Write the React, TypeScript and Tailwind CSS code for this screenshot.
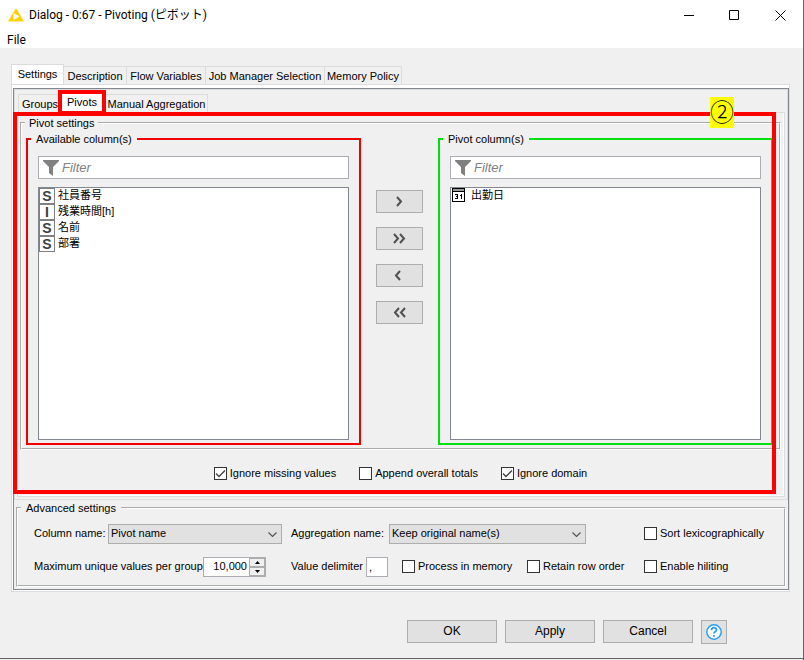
import { useState } from 'react';
import type { ReactNode } from 'react';
import clsx from 'clsx';

type ColumnType = 'S' | 'I' | 'date';

interface Column {
  name: string;
  type: ColumnType;
}

const availableColumns: Column[] = [
  { name: '社員番号', type: 'S' },
  { name: '残業時間[h]', type: 'I' },
  { name: '名前', type: 'S' },
  { name: '部署', type: 'S' },
];

const pivotColumns: Column[] = [{ name: '出勤日', type: 'date' }];

const settingsTabs = [
  { label: 'Description', width: 'w-[64px]' },
  { label: 'Flow Variables', width: 'w-[80px]' },
  { label: 'Job Manager Selection', width: 'w-[120px]' },
  { label: 'Memory Policy', width: 'w-[78px]' },
];

function TypeIcon({ type }: { type: ColumnType }) {
  if (type === 'date') {
    return (
      <svg className="w-[13px] h-[14px] ml-px mr-[3px] shrink-0" viewBox="0 0 13 14" shapeRendering="crispEdges" aria-hidden="true">
        <rect x="0.5" y="0.5" width="12" height="13" fill="#fff" stroke="#000" />
        <rect x="1" y="1" width="11" height="2" fill="#999" />
        <path d="M1 3.5h11M3 6.5h3M5.5 6v5M4 8.5h2M3 10.5h3M9.500 6v5M8 7.500h1" stroke="#000" fill="none" />
      </svg>
    );
  }
  return (
    <span className="size-4 shrink-0 border border-[#808080] bg-white text-[#404040] font-['Liberation_Sans'] font-bold text-sm leading-[14px] text-center">
      {type}
    </span>
  );
}

function FunnelIcon() {
  return (
    <svg className="w-4 h-4 col-start-1 row-start-1 ml-[5px] z-10" viewBox="0 0 16 16" aria-hidden="true">
      <path d="M0 0h16v1l-6 6v9l-4-3V7L0 1z" fill="#808080" />
    </svg>
  );
}

interface ColumnListProps {
  title: string;
  columns: Column[];
  className: string;
}

function ColumnList({ title, columns, className }: ColumnListProps) {
  const [filter, setFilter] = useState('');

  return (
    <fieldset className={clsx('flex-1 min-w-0 border-2 px-[10px] pt-[9px] pb-[3px]', className)}>
      <legend className="-ml-[7px] px-[5px] h-4 leading-4">{title}</legend>
      <div className="grid items-center">
        <FunnelIcon />
        <input
          value={filter}
          onChange={(e) => setFilter(e.target.value)}
          placeholder="Filter"
          aria-label={`Filter ${title}`}
          className="col-start-1 row-start-1 w-full h-[23px] pl-[23px] bg-white border border-[#abadb3] text-[13px] italic placeholder:text-[#808080] focus:outline-none"
        />
      </div>
      <ul className="mt-2 h-[253px] bg-white border border-[#828790] overflow-y-auto">
        {columns.map((column) => (
          <li key={column.name} className="flex items-start h-4 gap-[3px]">
            <TypeIcon type={column.type} />
            <span className="leading-[14px]">{column.name}</span>
          </li>
        ))}
      </ul>
    </fieldset>
  );
}

interface MoveButtonProps {
  label: string;
  path: string;
}

function MoveButton({ label, path }: MoveButtonProps) {
  return (
    <button aria-label={label} className="w-[47px] h-[23px] grid place-items-center bg-[#e1e1e1] border border-[#adadad]">
      <svg className="w-[13px] h-[11px]" viewBox="0 0 13 11" fill="none" stroke="#505050" strokeWidth="2" aria-hidden="true">
        <path d={path} />
      </svg>
    </button>
  );
}

interface CheckProps {
  label: string;
  defaultChecked?: boolean;
  className?: string;
}

function Check({ label, defaultChecked, className }: CheckProps) {
  return (
    <label className={clsx('flex items-center gap-[3px] whitespace-nowrap', className)}>
      <span className="grid">
        <input
          type="checkbox"
          defaultChecked={defaultChecked}
          className="peer col-start-1 row-start-1 appearance-none size-[13px] bg-white border border-[#333]"
        />
        <svg className="col-start-1 row-start-1 size-[13px] invisible peer-checked:visible pointer-events-none" viewBox="0 0 13 13" fill="none" stroke="#404040" aria-hidden="true">
          <path d="M2 6.500l3 3L11 3.500" strokeWidth="1.300" />
        </svg>
      </span>
      {label}
    </label>
  );
}

interface ComboProps {
  id: string;
  options: string[];
  className: string;
}

function Combo({ id, options, className }: ComboProps) {
  return (
    <span className={clsx('grid items-center', className)}>
      <select id={id} className="col-start-1 row-start-1 appearance-none w-full h-5 pl-[2px] bg-[#e1e1e1] border border-[#adadad]">
        {options.map((option) => (
          <option key={option}>{option}</option>
        ))}
      </select>
      <svg className="col-start-1 row-start-1 justify-self-end mr-[5px] mt-[3px] w-[9px] h-[6px] pointer-events-none" viewBox="0 0 9 6" fill="none" stroke="#555" aria-hidden="true">
        <path d="M0.500 0.500l4 4 4-4" strokeWidth="1.200" />
      </svg>
    </span>
  );
}

function DialogButton({ children }: { children: ReactNode }) {
  return <button className="w-[90px] h-[23px] bg-[#e1e1e1] border border-[#adadad] text-xs">{children}</button>;
}

function TitleBar() {
  return (
    <header className="bg-white text-xs font-[Roboto,'Noto_Sans_CJK_JP',sans-serif]">
      <div className="flex items-center h-[30px] pl-2">
        <svg className="w-4 h-[14px]" viewBox="0 0 16 14" aria-hidden="true">
          <path d="M8 0l8 13.500H0z" fill="#fdd100" />
          <path d="M5.500 5l6 3.500-6 3.500z" fill="#fff" />
        </svg>
        <h1 className="ml-[5px] flex-1">Dialog - 0:67 - Pivoting (ピボット)</h1>
        <button aria-label="Minimize" className="w-[45px] h-[30px] grid place-items-center">
          <svg className="size-[11px]" viewBox="0 0 11 11" stroke="#000" aria-hidden="true">
            <path d="M0 5.500h10" />
          </svg>
        </button>
        <button aria-label="Maximize" className="w-[45px] h-[30px] grid place-items-center">
          <svg className="size-[11px]" viewBox="0 0 11 11" fill="none" stroke="#000" aria-hidden="true">
            <path d="M0.500 0.500h9v9h-9z" />
          </svg>
        </button>
        <button aria-label="Close" className="w-[46px] h-[30px] grid place-items-center">
          <svg className="size-[11px]" viewBox="0 0 11 11" stroke="#000" aria-hidden="true">
            <path d="M0.500 0.500l10 10M10.500 0.500l-10 10" />
          </svg>
        </button>
      </div>
      <nav className="flex h-[18px] pl-[7px]">
        <button className="leading-5">File</button>
      </nav>
    </header>
  );
}

function PivotsPanel() {
  return (
    <div className="border border-[#dcdcdc] bg-[#f0f0f0] shadow-[inset_-1px_-1px_0_#fff] pl-[2px] pr-[3px] pb-[14px]">
      <fieldset className="border-2 [border-style:groove] border-white pl-1 pr-[6px] pb-[3px] mt-[2px]">
        <legend className="ml-[-1px] px-1 h-4 leading-4">Pivot settings</legend>
        <div className="flex">
          <ColumnList title="Available column(s)" columns={availableColumns} className="border-[#f00000]" />
          <div className="w-[77px] shrink-0 flex flex-col items-center gap-[14px] pt-[59px]">
            <MoveButton label="Add" path="M4 1l4 4.500-4 4.500" />
            <MoveButton label="Add all" path="M1 1l4 4.500-4 4.500M7 1l4 4.500-4 4.500" />
            <MoveButton label="Remove" path="M7 1L3 5.500l4 4.500" />
            <MoveButton label="Remove all" path="M6 1L2 5.500l4 4.500M12 1L8 5.500l4 4.500" />
          </div>
          <ColumnList title="Pivot column(s)" columns={pivotColumns} className="border-[#00e010]" />
        </div>
      </fieldset>
      <div className="flex justify-center gap-[23px] mt-[15px]">
        <Check label="Ignore missing values" defaultChecked />
        <Check label="Append overall totals" />
        <Check label="Ignore domain" defaultChecked />
      </div>
    </div>
  );
}

function AdvancedSettings() {
  return (
    <fieldset className="border-2 [border-style:groove] border-white mx-[2px] mb-[2px] pl-4 pr-[18px] pt-2 pb-[8px]">
      <legend className="-ml-[13px] px-[5px] h-4 leading-4">Advanced settings</legend>
      <div className="flex items-center h-5">
        <label htmlFor="column-name" className="w-[74px] whitespace-nowrap">Column name:</label>
        <Combo id="column-name" options={['Pivot name', 'Aggregation name']} className="w-[174px]" />
        <label htmlFor="aggregation-name" className="w-[98px] ml-[9px] whitespace-nowrap">Aggregation name:</label>
        <Combo id="aggregation-name" options={['Keep original name(s)', 'Aggregation method (column name)']} className="w-[197px]" />
        <Check label="Sort lexicographically" className="w-[122px] ml-auto" />
      </div>
      <div className="flex items-center h-5 mt-[13px]">
        <label htmlFor="max-values" className="w-[169px] whitespace-nowrap">Maximum unique values per group</label>
        <div className="flex w-[63px] h-5 bg-white border border-[#abadb3]">
          <input id="max-values" defaultValue="10,000" className="flex-1 min-w-0 text-right pr-[2px] focus:outline-none" />
          <div className="flex flex-col w-4">
            <button aria-label="Increase" className="flex-1 grid place-items-center bg-[#f0f0f0] border border-[#adadad]">
              <svg className="w-[5px] h-[3px]" viewBox="0 0 5 3" aria-hidden="true"><path d="M2.500 0L5 3H0z" /></svg>
            </button>
            <button aria-label="Decrease" className="flex-1 grid place-items-center bg-[#f0f0f0] border border-[#adadad]">
              <svg className="w-[5px] h-[3px]" viewBox="0 0 5 3" aria-hidden="true"><path d="M0 0h5L2.500 3z" /></svg>
            </button>
          </div>
        </div>
        <label htmlFor="delimiter" className="w-[75px] ml-[25px] whitespace-nowrap">Value delimiter</label>
        <input id="delimiter" defaultValue="," className="w-[22px] h-5 pl-[2px] bg-white border border-[#abadb3] focus:outline-none" />
        <Check label="Process in memory" className="w-[125px] ml-[14px]" />
        <Check label="Retain row order" />
        <Check label="Enable hiliting" className="w-[122px] ml-auto" />
      </div>
    </fieldset>
  );
}

const tabClass = 'h-[18px] border border-b-0 border-[#dcdcdc] whitespace-nowrap text-center leading-[18px]';

export default function App() {
  return (
    <div className="min-h-screen flex flex-col bg-[#f0f0f0] border-r border-[#646464] text-[11px] text-black font-['Liberation_Sans','Noto_Sans_CJK_JP',sans-serif]">
      <TitleBar />
      <main className="flex-1 pt-4 pl-[11px] pr-[13px] border-b border-[#646464] mb-px">
        <div role="tablist" className="flex items-end">
          <button role="tab" aria-selected="true" className="w-[53px] h-5 bg-white border border-b-0 border-[#dcdcdc]">
            Settings
          </button>
          {settingsTabs.map((tab) => (
            <button key={tab.label} role="tab" aria-selected="false" className={clsx(tabClass, '-ml-px', tab.width)}>
              {tab.label}
            </button>
          ))}
        </div>

        <div className="border border-[#dcdcdc] bg-white pt-[3px] pl-px pb-px">
          <div className="border border-[#828790] bg-[#f0f0f0]">
            <div className="relative border border-[#dcdcdc] pt-[2px] px-[2px] pb-[2px]">
              <div role="tablist" className="flex items-end h-5 pl-px">
                <button role="tab" aria-selected="false" className={clsx(tabClass, 'w-[41px] pl-[3px]')}>Groups</button>
                <button role="tab" aria-selected="true" className="relative z-10 w-[46px] h-5 bg-white">
                  Pivots
                  <span className="absolute -inset-x-px -top-[2px] -bottom-[3px] border-4 border-[#f00]" />
                </button>
                <button role="tab" aria-selected="false" className={clsx(tabClass, 'w-[103px]')}>Manual Aggregation</button>
              </div>
              <PivotsPanel />

              <div className="absolute -left-[2px] right-[11px] top-[22px] bottom-[5px] border-4 border-[#f00] pointer-events-none">
                <span className="absolute right-[38px] -top-[19px] w-6 h-[31px] bg-[#ff0] text-2xl leading-[28px] text-center font-['Noto_Sans_CJK_JP'] font-light">②</span>
              </div>
            </div>
            <AdvancedSettings />
          </div>
        </div>

        <div className="flex justify-end gap-2 mt-7 mb-[14px] pr-[63px]">
          <DialogButton>OK</DialogButton>
          <DialogButton>Apply</DialogButton>
          <DialogButton>Cancel</DialogButton>
          <button aria-label="Help" className="w-[26px] h-6 grid place-items-center bg-[#e1e1e1] border border-[#adadad]">
            <svg className="size-4" viewBox="0 0 16 16" fill="none" stroke="#2a9df4" aria-hidden="true">
              <circle cx="8" cy="8" r="7.200" fill="#fff" strokeWidth="1.500" />
              <path d="M5.500 6.200c0-3.500 5-3.200 5-0.400 0 1.700-2.500 1.700-2.500 3.700M8 11v1.800" strokeWidth="1.800" />
            </svg>
          </button>
        </div>
      </main>
    </div>
  );
}
